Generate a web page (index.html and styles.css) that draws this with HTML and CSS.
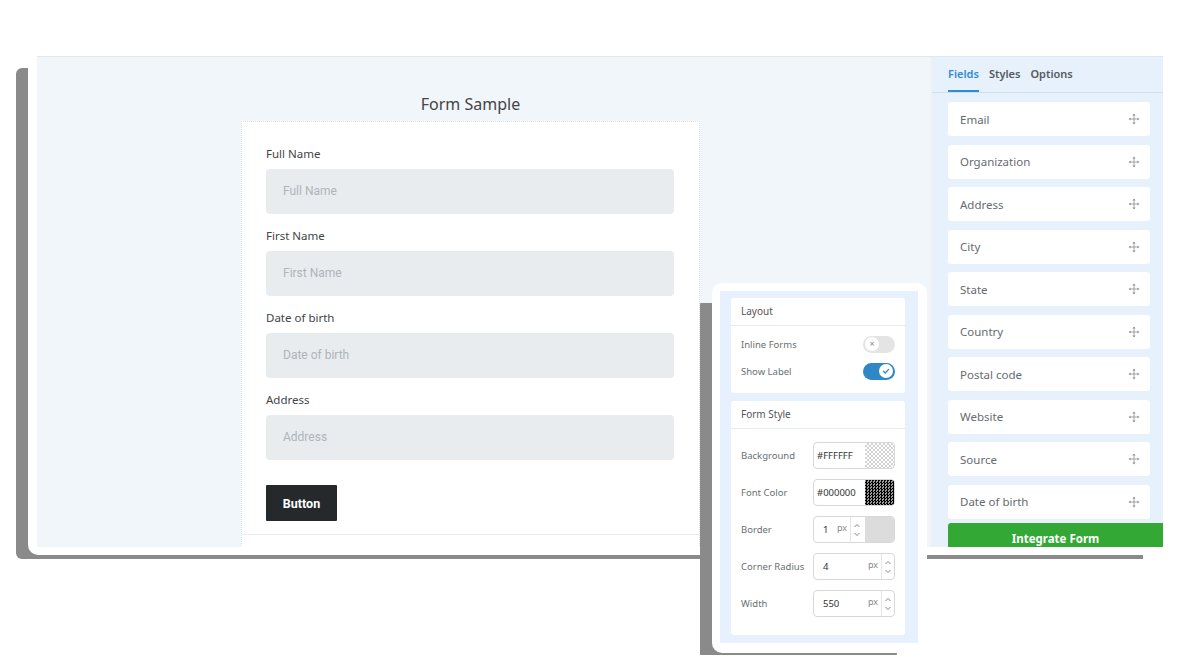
FILE: index.html
```html
<!DOCTYPE html>
<html lang="en">
<head>
  <meta charset="UTF-8" />
  <meta name="viewport" content="width=device-width, initial-scale=1.0"/>
  <title>Form Builder</title>
  <link rel="stylesheet" href="styles.css">
</head>
<body>
  <div class="stage">
    <div class="window">
      <div class="shot">
        <div class="canvas">
          <div class="form-wrap">
            <h2 class="form-title">Form Sample</h2>
            <div class="form-card">
              <div class="form-body">
                <div class="group">
                  <label>Full Name</label>
                  <div class="input">Full Name</div>
                </div>
                <div class="group">
                  <label>First Name</label>
                  <div class="input">First Name</div>
                </div>
                <div class="group">
                  <label>Date of birth</label>
                  <div class="input">Date of birth</div>
                </div>
                <div class="group">
                  <label>Address</label>
                  <div class="input">Address</div>
                </div>
                <button class="submit">Button</button>
              </div>
              <div class="form-foot"></div>
            </div>
          </div>
        </div>

        <aside class="fields">
          <div class="tabs">
            <span class="tab active">Fields</span>
            <span class="tab">Styles</span>
            <span class="tab">Options</span>
          </div>
          <ul class="field-list">
            <li>Email <svg class="move" viewBox="0 0 12 12"><use href="#mv"/></svg></li>
            <li>Organization <svg class="move" viewBox="0 0 12 12"><use href="#mv"/></svg></li>
            <li>Address <svg class="move" viewBox="0 0 12 12"><use href="#mv"/></svg></li>
            <li>City <svg class="move" viewBox="0 0 12 12"><use href="#mv"/></svg></li>
            <li>State <svg class="move" viewBox="0 0 12 12"><use href="#mv"/></svg></li>
            <li>Country <svg class="move" viewBox="0 0 12 12"><use href="#mv"/></svg></li>
            <li>Postal code <svg class="move" viewBox="0 0 12 12"><use href="#mv"/></svg></li>
            <li>Website <svg class="move" viewBox="0 0 12 12"><use href="#mv"/></svg></li>
            <li>Source <svg class="move" viewBox="0 0 12 12"><use href="#mv"/></svg></li>
            <li>Date of birth <svg class="move" viewBox="0 0 12 12"><use href="#mv"/></svg></li>
          </ul>
          <button class="integrate">Integrate Form</button>
        </aside>
      </div>
    </div>

    <!-- floating style panel -->
    <div class="settings">
      <div class="settings-inner">
        <div class="section">
          <div class="section-head">Layout</div>
          <div class="section-body layout-body">
            <div class="row">
              <span>Inline Forms</span>
              <span class="toggle">
                <span class="knob">×</span>
              </span>
            </div>
            <div class="row">
              <span>Show Label</span>
              <span class="toggle on">
                <span class="knob">
                  <svg viewBox="0 0 10 10"><path d="M2.5 5.2 L4.3 7 L7.6 3.4" fill="none" stroke="#2f87c5" stroke-width="1.3" stroke-linecap="round" stroke-linejoin="round"/></svg>
                </span>
              </span>
            </div>
          </div>
        </div>

        <div class="section">
          <div class="section-head">Form Style</div>
          <div class="section-body style-body">
            <div class="row">
              <span>Background</span>
              <span class="ctl">
                <span class="val hex">#FFFFFF</span>
                <span class="swatch check-light"></span>
              </span>
            </div>
            <div class="row">
              <span>Font Color</span>
              <span class="ctl">
                <span class="val hex">#000000</span>
                <span class="swatch check-dark"></span>
              </span>
            </div>
            <div class="row">
              <span>Border</span>
              <span class="ctl">
                <span class="val num short">1</span>
                <span class="unit">px</span>
                <span class="spin">
                  <svg viewBox="0 0 8 5"><path d="M1.5 4 L4 1.5 L6.5 4" /></svg>
                  <svg viewBox="0 0 8 5"><path d="M1.5 1 L4 3.5 L6.5 1" /></svg>
                </span>
                <span class="swatch grey"></span>
              </span>
            </div>
            <div class="row">
              <span>Corner Radius</span>
              <span class="ctl">
                <span class="val num">4</span>
                <span class="unit">px</span>
                <span class="spin">
                  <svg viewBox="0 0 8 5"><path d="M1.5 4 L4 1.5 L6.5 4" /></svg>
                  <svg viewBox="0 0 8 5"><path d="M1.5 1 L4 3.5 L6.5 1" /></svg>
                </span>
              </span>
            </div>
            <div class="row">
              <span>Width</span>
              <span class="ctl">
                <span class="val num">550</span>
                <span class="unit">px</span>
                <span class="spin">
                  <svg viewBox="0 0 8 5"><path d="M1.5 4 L4 1.5 L6.5 4" /></svg>
                  <svg viewBox="0 0 8 5"><path d="M1.5 1 L4 3.5 L6.5 1" /></svg>
                </span>
              </span>
            </div>
          </div>
        </div>
      </div>
    </div>
  </div>

  <svg width="0" height="0" style="position:absolute">
    <defs>
      <g id="mv" fill="#8a8f94" stroke="#8a8f94">
        <path d="M6 2.2 V9.8 M2.2 6 H9.8" stroke-width="0.8" fill="none"/>
        <path d="M6 0.6 L7.6 2.6 H4.4 Z M6 11.4 L7.6 9.4 H4.4 Z M0.6 6 L2.6 4.4 V7.6 Z M11.4 6 L9.4 4.4 V7.6 Z" stroke="none"/>
      </g>
    </defs>
  </svg>
</body>
</html>
```

FILE: styles.css
```css
body {
  margin: 0;
  background: #ffffff;
  font-family: 'Noto Sans', 'Open Sans', sans-serif;
  color: #444;
}
.stage {
  position: relative;
  width: 1200px;
  height: 670px;
  overflow: hidden;
}

/* main window */
.window {
  position: relative;
  margin: 56px 0 0 28px;
  width: 1135px;
  height: 499px;
  background: #fff;
  border-radius: 10px 0 0 10px;
  box-shadow: -16px 8px 0 -4px #8a8a8a;
}
.shot {
  margin-left: 9px;
  height: 491px;
  display: flex;
  overflow: hidden;
  border-top: 1px solid #e3e7ea;
  box-sizing: border-box;
}
.canvas {
  width: 893px;
  background: #f0f6fa;
  padding-top: 37px;
  overflow: hidden;
}
.form-wrap {
  margin-left: 204px;
  width: 459px;
}
.form-title {
  margin: 0 0 7px;
  font-size: 16px;
  line-height: 20px;
  font-weight: 400;
  text-align: center;
  color: #444;
}
.form-card {
  background: #fff;
  border: 1px dotted #d9e0e6;
}
.form-body {
  padding: 24px 25px 13px 24px;
}
.group {
  margin-bottom: 14px;
}
.group label {
  display: block;
  font-size: 11.5px;
  line-height: 16px;
  margin-bottom: 7px;
  color: #3f4448;
}
.input {
  height: 45px;
  line-height: 45px;
  padding-left: 17px;
  background: #e9ecef;
  border-radius: 4px;
  font-family: Roboto, sans-serif;
  font-size: 12px;
  color: #aeb4ba;
}
.submit {
  margin-top: 25px;
  width: 71px;
  height: 36px;
  border: none;
  border-radius: 1px;
  background: #25292c;
  color: #fff;
  font-family: Roboto, sans-serif;
  font-weight: 700;
  font-size: 12.5px;
  display: block;
}
.form-foot {
  border-top: 1px solid #e8ecef;
  height: 30px;
}

/* right field panel */
.fields {
  width: 233px;
  background: #e6f1fc;
  border-left: 2px solid #eef3f7;
  box-sizing: border-box;
  padding-left: 16px;
  padding-right: 13px;
}
.tabs {
  display: flex;
  gap: 10px;
  height: 36px;
  border-bottom: 1px solid #cfe0ef;
  box-sizing: border-box;
  margin-left: -16px;
  margin-right: -13px;
  padding-left: 16px;
}
.tab {
  padding-top: 9px;
  font-size: 11px;
  line-height: 16px;
  font-weight: 600;
  color: #555a5f;
  border-bottom: 2px solid transparent;
}
.tab.active {
  color: #2f8bd6;
  border-bottom-color: #2f8bd6;
}
.field-list {
  list-style: none;
  margin: 0;
  padding: 9px 0 0;
  display: flex;
  flex-direction: column;
  gap: 8.55px;
}
.field-list li {
  height: 34px;
  background: #fff;
  border-radius: 3px;
  display: flex;
  align-items: center;
  justify-content: space-between;
  padding: 0 10px 0 12px;
  font-size: 11.5px;
  color: #666b70;
}
.move {
  width: 12px;
  height: 12px;
}
.integrate {
  display: block;
  margin-top: 4px;
  margin-right: -13px;
  width: calc(100% + 13px);
  height: 32px;
  border: none;
  border-radius: 3px 0 0 0;
  background: #33a834;
  color: #fff;
  font-family: 'Noto Sans', sans-serif;
  font-weight: 700;
  font-size: 11.5px;
}

/* floating settings panel */
.settings {
  position: absolute;
  left: 712px;
  top: 283px;
  width: 215px;
  height: 370px;
  box-sizing: border-box;
  padding: 8px 9px 10px 8px;
  background: #fff;
  border-radius: 10px;
  box-shadow: -21px 11px 0 -9px #8a8a8a;
}
.settings-inner {
  height: 100%;
  box-sizing: border-box;
  background: #e6f1fd;
  padding: 7px 13px 0 11px;
}
.section {
  background: #fff;
  border-radius: 3px;
  margin-bottom: 8px;
}
.section-head {
  height: 27px;
  line-height: 27px;
  padding: 0 10px;
  font-size: 10px;
  color: #555;
  border-bottom: 1px solid #e4ebf2;
}
.section-body {
  padding: 0 10px;
  display: flex;
  flex-direction: column;
  font-size: 9.5px;
  color: #6a6f74;
}
.layout-body {
  padding-top: 8px;
  padding-bottom: 12px;
  gap: 7px;
}
.style-body {
  padding-top: 13px;
  padding-bottom: 18px;
  gap: 10px;
}
.row {
  display: flex;
  align-items: center;
  justify-content: space-between;
}
.layout-body .row {
  height: 20px;
}
.style-body .row {
  height: 27px;
}

.toggle {
  width: 32px;
  height: 17px;
  border-radius: 9px;
  background: #e4e4e4;
  position: relative;
}
.toggle .knob {
  position: absolute;
  top: 1.5px;
  left: 2px;
  width: 14px;
  height: 14px;
  border-radius: 50%;
  background: #fff;
  font-size: 9px;
  line-height: 14px;
  text-align: center;
  color: #888;
}
.toggle.on {
  background: #2f87c5;
}
.toggle.on .knob {
  left: 16px;
}
.toggle.on svg {
  width: 10px;
  height: 10px;
  margin-top: 2px;
}

.ctl {
  width: 82px;
  height: 27px;
  box-sizing: border-box;
  border: 1px solid #d6d9dc;
  border-radius: 4px;
  display: flex;
  align-items: center;
  overflow: hidden;
  color: #333;
}
.val {
  flex: 1;
  font-size: 9.5px;
}
.val.hex {
  padding-left: 3px;
}
.val.num {
  padding-left: 9px;
}
.val.short {
  flex: 0 0 auto;
  width: 6px;
  margin-right: 8px;
}
.unit {
  font-size: 9px;
  color: #888;
  margin-top: -5px;
  margin-right: 3px;
}
.spin {
  width: 12px;
  height: 100%;
  border-left: 1px solid #e3e5e7;
  display: flex;
  flex-direction: column;
  align-items: center;
  justify-content: center;
  gap: 4px;
}
.spin svg {
  width: 8px;
  height: 5px;
  fill: none;
  stroke: #777;
  stroke-width: 0.9;
}
.swatch {
  width: 29px;
  height: 100%;
  margin-left: auto;
}
.ctl .spin + .swatch {
  margin-left: 2px;
}
.check-light {
  background-color: #fff;
  background-image: conic-gradient(#d2d2d2 25%, #fff 0 50%, #d2d2d2 0 75%, #fff 0);
  background-size: 4px 4px;
}
.check-dark {
  background-color: #000;
  background-image: conic-gradient(#000 25%, #9a9a9a 0 50%, #000 0 75%, #9a9a9a 0);
  background-size: 3px 3px;
}
.grey {
  background: #dcdcdc;
}
```
